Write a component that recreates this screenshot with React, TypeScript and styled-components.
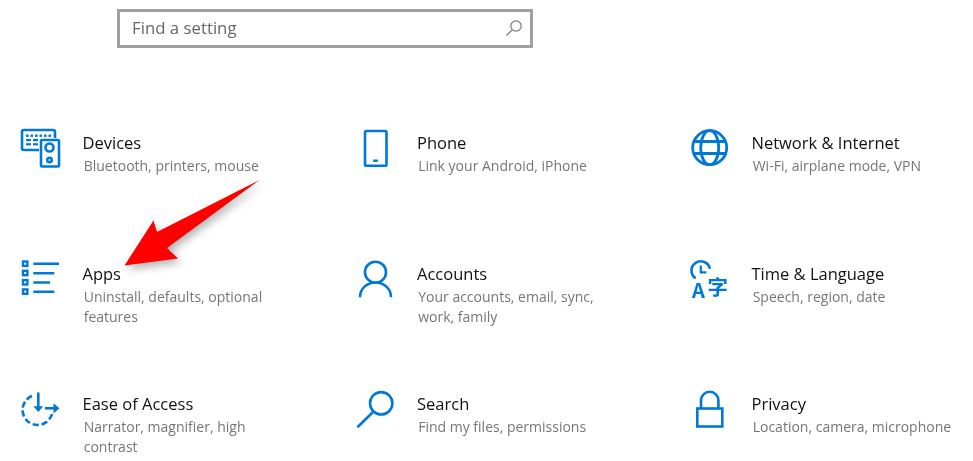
import React from "react";
import styled, { createGlobalStyle } from "styled-components";

const Global = createGlobalStyle`
  html, body { margin: 0; padding: 0; background: #fff; }
  body { font-family: "Open Sans", "Noto Sans", "Liberation Sans", sans-serif; }
`;

const Page = styled.div`
  position: relative;
  width: 973px;
  height: 461px;
  overflow: hidden;
  padding-top: 9px;
  box-sizing: border-box;
  filter: blur(0.35px);
`;

const SearchBox = styled.div`
  box-sizing: border-box;
  width: 416px;
  height: 39px;
  margin-left: 117px;
  border: 3px solid #a0a0a0;
  display: flex;
  align-items: center;
  justify-content: space-between;
  padding: 0 7px 2px 12px;
`;

const Placeholder = styled.span`
  font-size: 16.8px;
  color: #666;
`;

const Grid = styled.div`
  display: grid;
  grid-template-columns: repeat(3, 334.5px);
  grid-auto-rows: 130.5px;
  margin-top: 84px;
  padding-left: 18px;
`;

const Tile = styled.div`
  display: flex;
  gap: 21px;
  align-items: flex-start;
`;

const IconSlot = styled.svg`
  flex: none;
  width: 44px;
  height: 44px;
  margin-top: -6px;
  overflow: visible;
  fill: none;
  stroke: #0078d7;
  stroke-width: 2.6;
`;

const TextColumn = styled.div`
  display: flex;
  flex-direction: column;
  gap: 2px;
  width: 205px;
`;

const Title = styled.div`
  font-size: 16.5px;
  line-height: 22px;
  margin-left: -0.5px;
  color: #111;
`;

const Sub = styled.div`
  font-size: 14px;
  line-height: 20px;
  margin-left: 0.7px;
  color: #767676;
`;

const ArrowOverlay = styled.svg`
  position: absolute;
  left: 110px;
  top: 170px;
  width: 160px;
  height: 105px;
  overflow: visible;
  filter: drop-shadow(3px 4px 4px rgba(0, 0, 0, 0.3));
`;

const Solid = styled.g`
  fill: #0078d7;
  stroke: none;
`;

const GlyphText = styled.text`
  fill: #0078d7;
  stroke: none;
  font-family: "Noto Sans CJK SC", "Noto Sans", sans-serif;
  font-weight: 700;
`;

const DevicesIcon = () => (
  <IconSlot viewBox="0 0 44 44">
    <path d="M21 24H6a2 2 0 0 1-2-2V6a2 2 0 0 1 2-2h29a2 2 0 0 1 2 2v6" />
    <rect x="23" y="14" width="18" height="26.5" rx="1" />
    <circle cx="31.5" cy="21.5" r="4" />
    <circle cx="31.5" cy="34" r="2.2" />
    <Solid>
      {[8, 12.5, 17, 21.5, 26, 30.5].map((x) => (
        <rect key={x} x={x} y="8.5" width="2.6" height="2.4" />
      ))}
      <rect x="8" y="13" width="5" height="2.2" />
      <rect x="15" y="13" width="5" height="2.2" />
      <rect x="8" y="17.2" width="5" height="2.2" />
      <rect x="15" y="17.2" width="5" height="2.2" />
    </Solid>
  </IconSlot>
);

const PhoneIcon = () => (
  <IconSlot viewBox="0 0 44 44">
    <rect x="12" y="5" width="21.5" height="34.8" rx="1.5" />
    <Solid>
      <rect x="20.2" y="33.5" width="4.6" height="2.4" />
    </Solid>
  </IconSlot>
);

const GlobeIcon = () => (
  <IconSlot viewBox="0 0 44 44" style={{ strokeWidth: 2.8 }}>
    <circle cx="22.7" cy="21.7" r="17" />
    <ellipse cx="22.7" cy="21.7" rx="9" ry="17" />
    <path d="M7 15.5h31.4M7 27.5h31.4" />
  </IconSlot>
);

const AppsIcon = () => (
  <IconSlot viewBox="0 0 44 44">
    {[3.5, 12.8, 22.1, 31.4].map((y) => (
      <rect key={y} x="5" y={y + 1} width="4.4" height="4.4" strokeWidth="2.4" />
    ))}
    <path d="M15.3 6.8H41M15.3 16.2H36.3M15.3 25.5H32M15.3 34.8H36.3" />
  </IconSlot>
);

const AccountsIcon = () => (
  <IconSlot viewBox="0 0 44 44">
    <circle cx="22.5" cy="15.2" r="10.5" />
    <path d="M7 40.2c0-8.5 7-14.7 15.5-14.7S38 31.7 38 40.2" />
  </IconSlot>
);

const TimeIcon = () => (
  <IconSlot viewBox="0 0 44 44">
    <path d="M8.6 21.3A9.3 9.3 0 1 1 22.9 11.8" />
    <path d="M13.8 8.5v6.8h5.6" strokeWidth="2.2" />
    <GlyphText x="5" y="40.5" fontSize="20">A</GlyphText>
    <GlyphText x="20.5" y="38" fontSize="20.5">字</GlyphText>
  </IconSlot>
);

const EaseIcon = () => (
  <IconSlot viewBox="0 0 44 44">
    <path d="M34 27A15 15 0 1 1 15.5 8.5" strokeDasharray="6.2 2.8" />
    <path d="M20.3 5.5V20" />
    <path d="M27 21.3h10" />
    <Solid>
      <path d="M15.3 19.2h10l-5 5.8z" />
      <path d="M35.5 16.2l6 5.1-6 5.1z" />
    </Solid>
  </IconSlot>
);

const SearchIcon = () => (
  <IconSlot viewBox="0 0 44 44">
    <circle cx="28.2" cy="16.3" r="11.2" />
    <path d="M19.8 25.2L4.4 40.2" />
  </IconSlot>
);

const PrivacyIcon = () => (
  <IconSlot viewBox="0 0 44 44">
    <rect x="10.3" y="21.5" width="25" height="18" />
    <path d="M14 21V13.5a8.7 8.7 0 0 1 17.4 0V21" />
  </IconSlot>
);

const tiles = [
  { Icon: DevicesIcon, title: "Devices", sub: "Bluetooth, printers, mouse" },
  { Icon: PhoneIcon, title: "Phone", sub: "Link your Android, iPhone" },
  { Icon: GlobeIcon, title: "Network & Internet", sub: "Wi-Fi, airplane mode, VPN" },
  { Icon: AppsIcon, title: "Apps", sub: "Uninstall, defaults, optional features" },
  { Icon: AccountsIcon, title: "Accounts", sub: "Your accounts, email, sync, work, family" },
  { Icon: TimeIcon, title: "Time & Language", sub: "Speech, region, date" },
  { Icon: EaseIcon, title: "Ease of Access", sub: "Narrator, magnifier, high contrast" },
  { Icon: SearchIcon, title: "Search", sub: "Find my files, permissions" },
  { Icon: PrivacyIcon, title: "Privacy", sub: "Location, camera, microphone" },
];

export default function App() {
  return (
    <Page>
      <Global />
      <SearchBox>
        <Placeholder>Find a setting</Placeholder>
        <svg width="18" height="18" viewBox="0 0 18 18" fill="none" stroke="#777" strokeWidth="1.2">
          <circle cx="11" cy="7" r="5.2" />
          <path d="M7.2 10.8L1.5 16.5" />
        </svg>
      </SearchBox>
      <Grid>
        {tiles.map(({ Icon, title, sub }) => (
          <Tile key={title}>
            <Icon />
            <TextColumn>
              <Title>{title}</Title>
              <Sub>{sub}</Sub>
            </TextColumn>
          </Tile>
        ))}
      </Grid>
      <ArrowOverlay viewBox="110 170 160 105">
        <path d="M124.5 265.5L153.5 220.5L157 232L259.5 180L167 248L178 258.5Z" fill="#fe0000" />
      </ArrowOverlay>
    </Page>
  );
}
